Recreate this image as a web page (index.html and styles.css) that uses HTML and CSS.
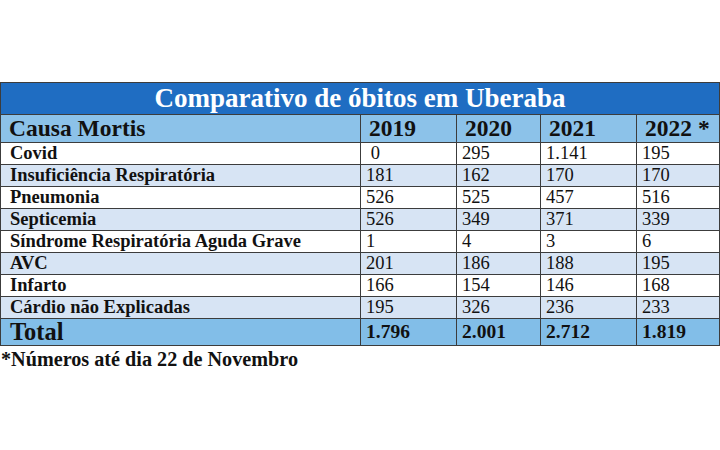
FILE: index.html
```html
<!DOCTYPE html>
<html lang="pt-BR">
<head>
<meta charset="utf-8">
<title>Comparativo de óbitos em Uberaba</title>
<link rel="stylesheet" href="styles.css">
</head>
<body>
<div class="page">
  <table class="obitos">
    <colgroup>
      <col class="c-causa"><col class="c-ano"><col class="c-ano2"><col class="c-ano"><col class="c-ano3">
    </colgroup>
    <thead>
      <tr class="title-row"><th colspan="5">Comparativo de óbitos em Uberaba</th></tr>
      <tr class="head-row"><th>Causa Mortis</th><th>2019</th><th>2020</th><th>2021</th><th>2022 *</th></tr>
    </thead>
    <tbody>
      <tr class="odd"><th>Covid</th><td>&nbsp;0</td><td>295</td><td>1.141</td><td>195</td></tr>
      <tr class="even"><th>Insuficiência Respiratória</th><td>181</td><td>162</td><td>170</td><td>170</td></tr>
      <tr class="odd"><th>Pneumonia</th><td>526</td><td>525</td><td>457</td><td>516</td></tr>
      <tr class="even"><th>Septicemia</th><td>526</td><td>349</td><td>371</td><td>339</td></tr>
      <tr class="odd"><th>Síndrome Respiratória Aguda Grave</th><td>1</td><td>4</td><td>3</td><td>6</td></tr>
      <tr class="even"><th>AVC</th><td>201</td><td>186</td><td>188</td><td>195</td></tr>
      <tr class="odd"><th>Infarto</th><td>166</td><td>154</td><td>146</td><td>168</td></tr>
      <tr class="even"><th>Cárdio não Explicadas</th><td>195</td><td>326</td><td>236</td><td>233</td></tr>
    </tbody>
    <tfoot>
      <tr class="total-row"><th>Total</th><td>1.796</td><td>2.001</td><td>2.712</td><td>1.819</td></tr>
    </tfoot>
  </table>
  <p class="note">*Números até dia 22 de Novembro</p>
</div>
</body>
</html>
```
FILE: styles.css
```css
html, body {
  margin: 0;
  padding: 0;
  background: #ffffff;
}
.page {
  padding-top: 82px;
  font-family: "Liberation Serif", "Times New Roman", serif;
  color: #111111;
}
.obitos {
  width: 719px;
  border-collapse: collapse;
  table-layout: fixed;
}
.c-causa { width: 360px; }
.c-ano { width: 96px; }
.c-ano2 { width: 84px; }
.c-ano3 { width: 83px; }
.obitos th, .obitos td {
  border: 1px solid #3c3c3c;
  padding: 0 0 0 6px;
  text-align: left;
  white-space: nowrap;
  overflow: hidden;
}
.obitos th {
  font-weight: bold;
  padding-left: 9px;
}
.obitos td {
  font-size: 18.5px;
  font-weight: normal;
  padding-left: 5px;
}
.title-row th {
  background: #1f6dc2;
  color: #ffffff;
  text-align: center;
  font-size: 27px;
  height: 31px;
  line-height: 31px;
  padding: 0;
}
.head-row th {
  background: #8cc2e9;
  font-size: 23.5px;
  height: 27px;
  line-height: 27px;
  padding-left: 8px;
}
.odd th, .odd td, .even th, .even td {
  height: 21px;
  line-height: 21px;
}
.odd th, .even th { font-size: 18.5px; }
.odd { background: #ffffff; }
.even { background: #d7e4f4; }
.total-row th, .total-row td {
  background: #82bee8;
  font-weight: bold;
  height: 26px;
  line-height: 26px;
}
.total-row th { font-size: 24.5px; }
.total-row td { font-size: 19.5px; }
.note {
  margin: 2px 0 0 1px;
  font-size: 20.2px;
  font-weight: bold;
  line-height: 22px;
}
```
